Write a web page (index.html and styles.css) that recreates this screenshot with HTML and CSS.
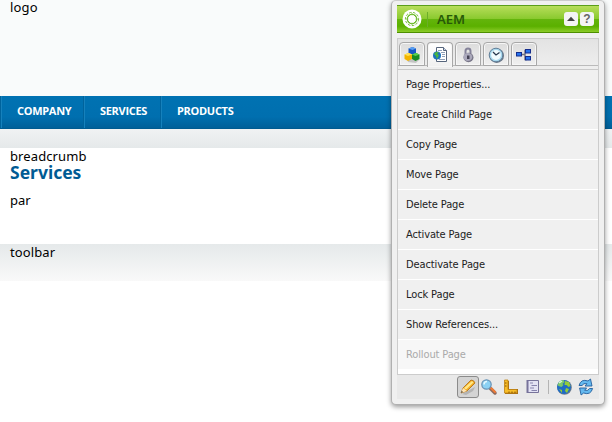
FILE: index.html
```html
<!DOCTYPE html>
<html lang="en">
<head>
<meta charset="utf-8">
<title>Services</title>
<link rel="stylesheet" href="styles.css">
</head>
<body>
<header class="logo"><span>logo</span></header>
<nav class="nav"><a class="company">COMPANY</a><a class="services">SERVICES</a><a class="products">PRODUCTS</a></nav>
<div class="band"></div>
<main class="content">
  <div class="breadcrumb">breadcrumb</div>
  <h1>Services</h1>
  <div class="par">par</div>
</main>
<footer class="toolbar"><span>toolbar</span></footer>

<aside class="sidekick">
  <div class="title">
    <svg width="20" height="20" viewBox="0 0 20 20"><circle cx="10" cy="10" r="9.500" fill="#fff"/><g fill="none" stroke="#63b51d" stroke-width=".9"><rect x="5.700" y="5.700" width="8.600" height="8.600" rx="2.500"/><rect x="5.700" y="5.700" width="8.600" height="8.600" rx="2.500" transform="rotate(45 10 10)"/><circle cx="10" cy="10" r="6.600" stroke-dasharray="2.500 1.500"/></g><circle cx="10" cy="10" r="3.200" fill="#fff"/></svg>
    <span class="name">AEM</span>
    <span class="tool"><svg width="14" height="14"><path d="M3 9 7 4.800 11 9Z" fill="#444"/></svg></span>
    <span class="tool help">?</span>
  </div>
  <div class="panel">
    <div class="tabs">
      <span class="tab"><svg width="18" height="18" viewBox="0 0 18 18"><path d="m4 13 6-5 7 5-4 4-8-1Z" fill="#777" opacity=".35"/><path d="M5.500 2.500 9.500 1 13 2.500V7L9.500 8.500 5.500 7Z" fill="#1757c4"/><path d="M5.500 2.500 9.500 1 13 2.500 9.500 4Z" fill="#5aa0f2"/><path d="m9 8.500 4-1.500 3.500 1.500V13l-4 2L9 13Z" fill="#188c22"/><path d="m9 8.500 4-1.500 3.500 1.500-4 1.500Z" fill="#58d04c"/><path d="M1.500 8.500 5.500 7 9 8.500V13l-4 2-3.500-2Z" fill="#f2b400"/><path d="M1.500 8.500 5.500 7 9 8.500 5 10Z" fill="#ffe253"/></svg></span>
      <span class="tab active"><svg width="18" height="18" viewBox="0 0 18 18"><path d="M5.500 1.500h7l3 3v11h-10Z" fill="#fff" stroke="#56657c"/><path d="M12.500 1.500v3h3" fill="#ccd7e8" stroke="#56657c"/><path d="M7 4.500h4M10 6.500h4M11 8.500h3M11 10.500h3M8 13.500h6" stroke="#8fa0b8"/><circle cx="6" cy="9.500" r="4" fill="#1c70bc"/><path d="m3 8 2-2 3 0-2 2 2 1-2 4-1-3Z" fill="#49b53d"/></svg></span>
      <span class="tab"><svg width="18" height="18" viewBox="0 0 18 18"><path d="M6.500 9V5a2.500 2.500 0 0 1 5 0V9" fill="none" stroke="#85839a" stroke-width="2"/><ellipse cx="9.500" cy="11.500" rx="5" ry="4.700" fill="#777587"/><ellipse cx="8.800" cy="11" rx="4.500" ry="4" fill="#aaa8bb"/><path d="M8 9.500h2.500v3.500H8Z" fill="#444255"/></svg></span>
      <span class="tab"><svg width="18" height="18" viewBox="0 0 18 18"><circle cx="9.700" cy="9.700" r="7.300" fill="#687586"/><circle cx="9" cy="9" r="6.800" fill="#a8d8ee" stroke="#627f98"/><circle cx="9" cy="9" r="4.900" fill="#f0fbff"/><path d="m6 6 3 3 3.500-2.500" fill="none" stroke="#26374d" stroke-width="1.300"/></svg></span>
      <span class="tab"><svg width="18" height="18" viewBox="0 0 18 18"><path d="M6 8.500h4m0 0v-4h2m-2 4v5h2" fill="none" stroke="#71717e" stroke-width="1.400"/><g fill="#2673ed" stroke="#152e8d"><rect x="1.500" y="6.500" width="5" height="3.500"/><rect x="10.500" y="3.500" width="5" height="3.500"/><rect x="10.500" y="10.500" width="5" height="3.500"/></g></svg></span>
    </div>
    <ul class="menu">
      <li><span>Page Properties...</span></li><li><span>Create Child Page</span></li><li><span>Copy Page</span></li><li><span>Move Page</span></li><li><span>Delete Page</span></li><li><span>Activate Page</span></li><li><span>Deactivate Page</span></li><li><span>Lock Page</span></li><li><span>Show References...</span></li><li class="disabled"><span>Rollout Page</span></li>
    </ul>
  </div>
  <div class="actions">
    <span class="action selected"><svg width="18" height="18" viewBox="0 0 18 18"><path d="m3 16 13-7-2 4-7 4Z" fill="#777" opacity=".35"/><path d="m2 15 2-5 8-8q3 0 4 3l-8 8Z" fill="#f5ad22" stroke="#a96b13" stroke-width=".8"/><path d="m5 10 8-7 1.500 1.500L7 11.500Z" fill="#ffe888"/><path d="m2 15 2-5 4 3Z" fill="#ffe5b5"/><path d="m2 15 .8-2 1.200 1Z" fill="#333"/></svg></span>
    <span class="action"><svg width="18" height="18" viewBox="0 0 18 18"><path d="m10.500 10.500 4.500 4.500" stroke="#8e6a5e" stroke-width="3.500" stroke-linecap="round"/><path d="m11 10 4 4" stroke="#f27c34" stroke-width="2" stroke-linecap="round"/><circle cx="6.500" cy="6.500" r="4.700" fill="#8bd1f4" stroke="#6992b5" stroke-width="1.200"/><path d="M4 6.500q0-3 3-3" fill="none" stroke="#e4f8ff" stroke-width="1.500"/></svg></span>
    <span class="action"><svg width="18" height="18" viewBox="0 0 18 18"><path d="M3 3h4v8h9v5H3Z" fill="#a56d17"/><path d="M2.500 2h3.500v9.500h9V15H2.500Z" fill="#f7bd28" stroke="#bd8010" stroke-width=".8"/><path d="M3 5h1.500M3 8h1.500M7 15v-1.500M10 15v-1.500M13 15v-1.500" stroke="#855300"/></svg></span>
    <span class="action"><svg width="18" height="18" viewBox="0 0 18 18"><path d="M3.500 2.500h11v12h-11Z" fill="#e3e2f4" stroke="#77739a"/><path d="M3.500 2v13" stroke="#77739a" stroke-width="2"/><path d="M6 5h3M7.500 7.500H13M6 10h4M7.500 12.500H13" stroke="#8784ad"/></svg></span>
    <i></i>
    <span class="action"><svg width="18" height="18" viewBox="0 0 18 18"><circle cx="9.500" cy="9.500" r="7.300" fill="#707b88"/><circle cx="9" cy="9" r="7" fill="#1f6cc4"/><path d="M2.500 7q2-5 6-5l1 2-2 2 1 1-2 2-3-1Z" fill="#7cc86a"/><path d="m10 3 4 1 1.500 4-2 1-2-2-2 0Zm1 7 3 1-2 4-2-2ZM4 11l3 1 0 3Z" fill="#95cc38"/><path d="m4 5 3-2" stroke="#d8f8d0" stroke-width="1.500"/></svg></span>
    <span class="action"><svg width="18" height="18" viewBox="0 0 18 18"><g id="arrow"><path d="M2 7.500q2-7 9-4.500l2.500-2 1.500 7H8l2-2.300q-3.500-1-5 1.800Z" fill="#64b9ef" stroke="#235d9c" stroke-width=".9"/></g><use href="#arrow" transform="rotate(180 8.800 9)"/></svg></span>
  </div>
</aside>
</body>
</html>
```
FILE: styles.css
```css
* { box-sizing: border-box; }
body { margin: 0; height: 422px; overflow: hidden; background: #fff; color: #000; font: 13px/16px "Noto Sans", sans-serif; position: relative; }
svg { display: block; }
.logo { height: 96px; padding-left: 10px; background: #f9fbfb; line-height: 15px; letter-spacing: .2px; }
.nav { height: 33px; display: flex; background: linear-gradient(#0072b2, #006faf 65%, #006099); border-bottom: 1px solid #005b91; color: #fff; font: bold 11px/30px "Open Sans", sans-serif; }
.nav a { border-left: 1px solid #1681bc; box-shadow: -1px 0 #00639c; padding-left: 15px; letter-spacing: -.3px; }
.company { margin-left: 1px; width: 83px; }
.services { width: 77px; }
.band { height: 19px; background: linear-gradient(#f0f2f3, #e5e9ea); }
.content { height: 96px; padding-left: 10px; }
.breadcrumb { line-height: 17px; letter-spacing: .1px; }
h1 { margin: 0; color: #005b94; font: bold 17.500px/15px "Noto Sans", sans-serif; }
.par { margin-top: 12px; line-height: 17px; }
.toolbar { height: 37px; padding-left: 10px; background: linear-gradient(#e5e9ea, #f9f9f9); line-height: 17px; letter-spacing: .1px; }
.sidekick { position: absolute; left: 391px; top: 0; width: 214px; height: 405px; padding: 4px 5px 5px; border: 1px solid #b0b0b0; border-top-color: #ccc; border-radius: 5px; background: #f0f0f0; box-shadow: 0 2px 5px rgba(0,0,0,.4); }
.title { height: 28px; display: flex; align-items: center; border-top: 1px solid #5b9e19; border-bottom: 1px solid #4d8f00; background: linear-gradient(#b7dd5a, #8bca30 48%, #63b40b 52%, #5bb000 78%, #8ccc28); padding: 0 5px; }
.name { height: 15px; margin: 0 auto 0 5px; padding-left: 9px; border-left: 1px solid #6cae29; color: #285908; font: 600 13px/15px "Noto Sans", sans-serif; }
.tool { width: 14px; height: 14px; margin-left: 2px; border-radius: 3px; background: #f4f4f4; color: #666; text-align: center; font: bold 12px/14px "Liberation Sans", sans-serif; }
.panel { height: 337px; margin-top: 5px; border: 1px solid #ccc; background: #fff; }
.tabs { height: 30px; display: flex; padding: 3px 1px 0; gap: 2px; background: linear-gradient(#e3e3e3, #eee); border-bottom: 3px solid #eee; box-shadow: inset 0 -1px #bbb; }
.tab { width: 26px; height: 24px; padding: 3px; border: 1px solid #a8a8a8; border-radius: 4px 4px 0 0; background: linear-gradient(#dcdcdc, #f0f0f0); box-shadow: inset 0 0 0 1px #f6f6f6; }
.active { height: 25px; border-bottom: 0; background: linear-gradient(#fff, #f0f0f0); }
.menu { margin: 0; padding: 0; border-top: 1px solid #c9c9c9; list-style: none; font: 11px/29px "DejaVu Sans Condensed", "DejaVu Sans", sans-serif; }
.menu li { height: 30px; padding-left: 8px; background: #f0f0f0; border-bottom: 1px solid #fff; color: #222; }
.menu span { letter-spacing: -.12px; }
.menu .disabled { background: #f7f7f7; color: #aaa; }
.actions { height: 24px; display: flex; align-items: center; justify-content: flex-end; background: #e9e9e9; padding-right: 2px; }
.action { width: 22px; height: 22px; padding: 2px; flex: none; }
.selected { margin-right: -1px; border: 1px solid #8b8b8b; border-radius: 3px; background: #d4d4d4; padding: 1px; }
.actions i { width: 1px; height: 14px; margin: 0 4px; background: #b4b4b4; }
```
